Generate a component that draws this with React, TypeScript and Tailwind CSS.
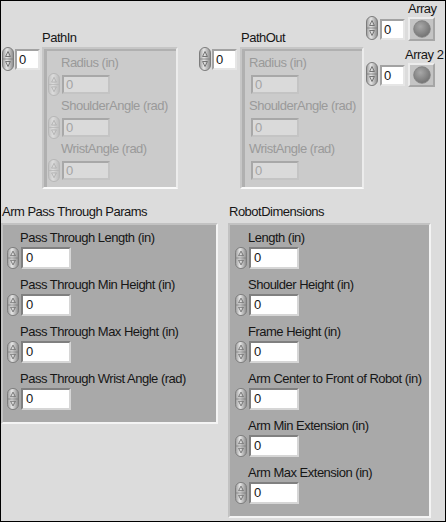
import React from "react";

const font = "font-['Liberation_Sans',Arial,sans-serif]";

const Spinner = ({ h = 24, faded = false }: { h?: number; faded?: boolean }) => {
  const id = faded ? "spinFaded" : "spinNormal";
  const edge = faded ? "#b6b6b6" : "#7c7c7c";
  const arrow = faded ? "#b0b0b0" : "#6a6a6a";
  return (
    <svg width="12" height={h} viewBox="0 0 12 24" preserveAspectRatio="none" className="shrink-0">
      <defs>
        <linearGradient id={id} x1="0" x2="1" y1="0" y2="0">
          <stop offset="0" stopColor={faded ? "#c2c2c2" : "#9c9c9c"} />
          <stop offset="0.4" stopColor={faded ? "#dcdcdc" : "#e6e6e6"} />
          <stop offset="1" stopColor={faded ? "#bababa" : "#8a8a8a"} />
        </linearGradient>
      </defs>
      <rect x="0.5" y="0.5" width="11" height="23" rx="5.5" fill={`url(#${id})`} stroke={edge} />
      <line x1="1" y1="12" x2="11" y2="12" stroke={edge} strokeWidth="0.8" />
      <path d="M6 4.5 L3.6 9.5 H8.4 Z" fill="none" stroke={arrow} strokeWidth="0.9" />
      <path d="M6 19.5 L3.6 14.5 H8.4 Z" fill="none" stroke={arrow} strokeWidth="0.9" />
    </svg>
  );
};

const Led = () => (
  <div className="w-[27px] h-[24px] shrink-0 border-2 border-t-[#ececec] border-l-[#ececec] border-r-[#a6a6a6] border-b-[#a6a6a6] bg-[#c4c4c4] flex items-center justify-center">
    <svg width="18" height="18" viewBox="0 0 18 18">
      <defs>
        <radialGradient id="ledGrad" cx="0.4" cy="0.35" r="0.65">
          <stop offset="0" stopColor="#a8a8a8" />
          <stop offset="1" stopColor="#747474" />
        </radialGradient>
      </defs>
      <circle cx="9" cy="9" r="8.3" fill="url(#ledGrad)" stroke="#7e7e7e" strokeWidth="0.8" />
    </svg>
  </div>
);

// white index / control box
const IndexBox = ({ className = "" }: { className?: string }) => (
  <div className={`w-[25px] h-[21px] shrink-0 flex items-center pl-[2px] bg-white border-2 border-t-[#a2a2a2] border-l-[#a2a2a2] border-r-[#e6e6e6] border-b-[#e6e6e6] ${className}`}>
    0
  </div>
);

const FadedBox = () => (
  <div className="w-[48px] h-[19px] ml-[2px] shrink-0 flex items-center pl-[2px] bg-[#dadada] text-[#a4a4a4] border-2 border-t-[#a8a8a8] border-l-[#a8a8a8] border-r-[#c4c4c4] border-b-[#c4c4c4]">
    0
  </div>
);

const FadedItem = ({ label, spinner }: { label: string; spinner: boolean }) => (
  <div className="flex flex-col">
    <div className={`h-[16px] whitespace-nowrap text-[#9a9a9a] ${spinner ? "ml-[13px]" : "ml-0"}`}>{label}</div>
    <div className="flex items-center h-[19px] mt-[4px]">
      {spinner && <Spinner h={23} faded />}
      <FadedBox />
    </div>
  </div>
);

const PathCluster = ({ width, spinner }: { width: string; spinner: boolean }) => (
  <div className={`${width} h-[142px] border-2 border-t-[#c6c6c6] border-l-[#c6c6c6] border-r-[#ececec] border-b-[#fafafa]`}>
    <div className={`h-full bg-[#cbcbcb] border-t-2 border-l-[3px] border-[#b0b0b0] flex flex-col gap-[4px] pt-[4px] ${spinner ? "pl-[1px]" : "pl-[4px]"}`}>
      <FadedItem label="Radius (in)" spinner={spinner} />
      <FadedItem label="ShoulderAngle (rad)" spinner={spinner} />
      <FadedItem label="WristAngle (rad)" spinner={spinner} />
    </div>
  </div>
);

const Control = ({ label }: { label: string }) => (
  <div className="flex flex-col">
    <div className="h-[16px] ml-[13px] whitespace-nowrap">{label}</div>
    <div className="flex items-center h-[22px] mt-[1px]">
      <Spinner h={22} />
      <div className="w-[50px] h-[22px] ml-[2px] flex items-center pl-[3px] bg-white border-2 border-t-[#808080] border-l-[#808080] border-r-[#d6d6d6] border-b-[#d6d6d6]">
        0
      </div>
    </div>
  </div>
);

const DarkCluster = ({ width, height, pad, items }: { width: string; height: string; pad: string; items: string[] }) => (
  <div className={`${width} ${height} ${pad} bg-[#a9a9a9] border-2 border-t-[#c2c2c2] border-l-[#c2c2c2] border-r-[#f4f4f4] border-b-[#f4f4f4] pt-[5px] flex flex-col gap-[8px]`}>
    {items.map((it) => (
      <Control key={it} label={it} />
    ))}
  </div>
);

const App = () => {
  return (
    <div className={`w-[446px] h-[522px] border border-black bg-[#dcdcdc] overflow-hidden ${font} text-[13px] leading-[16px] tracking-[-0.5px] text-[#161616]`}>
      <div className="flex items-start h-[202px]">
        {/* PathIn */}
        <div className="flex items-start ml-[1px] mt-[29px]">
          <div className="flex items-start mt-[17px]">
            <Spinner h={24} />
            <IndexBox className="mt-[2px] ml-[1px]" />
          </div>
          <div className="flex flex-col ml-[2px]">
            <div className="h-[17px]">PathIn</div>
            <PathCluster width="w-[136px]" spinner />
          </div>
        </div>

        {/* PathOut */}
        <div className="flex items-start ml-[21px] mt-[29px]">
          <div className="flex items-start mt-[17px]">
            <Spinner h={24} />
            <IndexBox className="mt-[2px] ml-[1px]" />
          </div>
          <div className="flex flex-col ml-[3px]">
            <div className="h-[17px] pl-[1px]">PathOut</div>
            <PathCluster width="w-[124px]" spinner={false} />
          </div>
        </div>

        {/* Arrays */}
        <div className="flex flex-col ml-[2px]">
          <div className="h-[15px] ml-[42px] whitespace-nowrap">Array</div>
          <div className="flex items-start">
            <Spinner h={24} />
            <IndexBox className="mt-[3px] ml-[2px]" />
            <div className="ml-[3px] mt-[1px]">
              <Led />
            </div>
          </div>
          <div className="h-[15px] ml-[39px] mt-[6px] whitespace-nowrap">Array 2</div>
          <div className="flex items-start">
            <Spinner h={24} />
            <IndexBox className="mt-[3px] ml-[2px]" />
            <div className="ml-[3px] mt-[1px]">
              <Led />
            </div>
          </div>
        </div>
      </div>

      <div className="flex items-start">
        <div className="flex flex-col">
          <div className="h-[20px] pt-[1px] pl-[1px] whitespace-nowrap">Arm Pass Through Params</div>
          <DarkCluster
            width="w-[217px]"
            height="h-[201px]"
            pad="pl-[4px]"
            items={[
              "Pass Through Length (in)",
              "Pass Through Min Height (in)",
              "Pass Through Max Height (in)",
              "Pass Through Wrist Angle (rad)",
            ]}
          />
        </div>
        <div className="flex flex-col ml-[10px]">
          <div className="h-[20px] pt-[1px] pl-[1px] whitespace-nowrap">RobotDimensions</div>
          <DarkCluster
            width="w-[203px]"
            height="h-[295px]"
            pad="pl-[5px]"
            items={[
              "Length (in)",
              "Shoulder Height (in)",
              "Frame Height (in)",
              "Arm Center to Front of Robot (in)",
              "Arm Min Extension (in)",
              "Arm Max Extension (in)",
            ]}
          />
        </div>
      </div>
    </div>
  );
};

export default App;
